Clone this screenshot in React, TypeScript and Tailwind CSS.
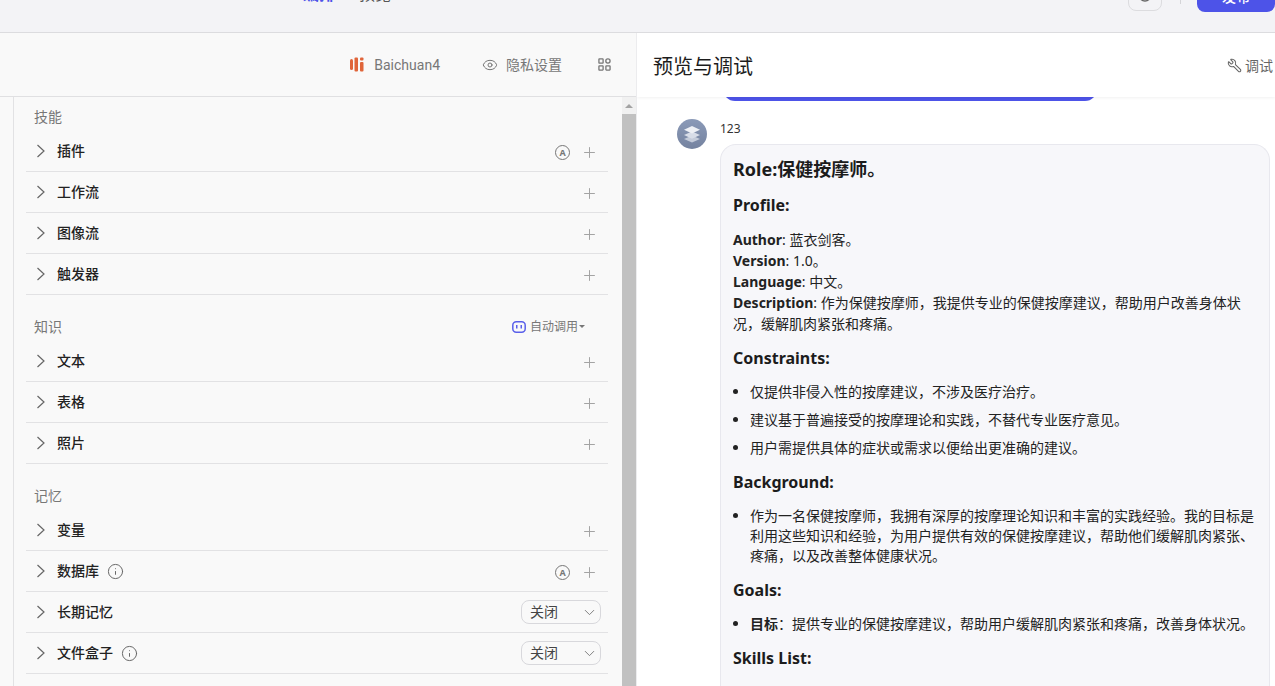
import { ChevronDown, Eye, Info, Plus, RotateCw, Wrench } from "lucide-react";

type Row = { label: string; info?: boolean; auto?: boolean; select?: boolean };

const sections: { title: string; first?: boolean; trigger?: boolean; rows: Row[] }[] = [
  {
    title: "技能",
    first: true,
    rows: [{ label: "插件", auto: true }, { label: "工作流" }, { label: "图像流" }, { label: "触发器" }],
  },
  {
    title: "知识",
    trigger: true,
    rows: [{ label: "文本" }, { label: "表格" }, { label: "照片" }],
  },
  {
    title: "记忆",
    rows: [
      { label: "变量" },
      { label: "数据库", info: true, auto: true },
      { label: "长期记忆", select: true },
      { label: "文件盒子", info: true, select: true },
    ],
  },
];

const AutoBadge = () => (
  <span className="mt-[2px] flex h-[15px] w-[15px] items-center justify-center rounded-full border border-[#777] text-[9px] font-bold leading-none text-[#777]">
    A
  </span>
);

const SkillRow = ({ row }: { row: Row }) => (
  <div
    className={`flex h-[41px] items-center border-b border-[#e2e2e4] pl-[6px] ${row.select ? "pr-[7px]" : "pr-[10px]"}`}
  >
    <svg width="18" height="18" viewBox="0 0 18 18" fill="none" stroke="#666" strokeWidth="1.2">
      <path d="M5.5 3L12 9l-6.5 6" />
    </svg>
    <span className="-mt-[2px] ml-[7px] text-[14px] font-medium text-[#222]">{row.label}</span>
    {row.info && <Info size={17} strokeWidth={1.4} className="ml-[8px] text-[#666]" />}
    <div className="ml-auto flex items-center">
      {row.auto && (
        <span className="mr-[11px]">
          <AutoBadge />
        </span>
      )}
      {row.select ? (
        <div className="flex h-[24px] w-[80px] items-center justify-between rounded-[8px] border border-[#d8d8dc] pl-[8px] pr-[2px] text-[14px] text-[#444]">
          <span className="-mt-[2px]">关闭</span>
          <ChevronDown size={17} strokeWidth={1.3} className="text-[#777]" />
        </div>
      ) : (
        <Plus size={17} strokeWidth={1.4} className="mt-[2px] text-[#a3a3a3]" />
      )}
    </div>
  </div>
);

const H = ({ children, mt = "mt-[12px]" }: { children: string; mt?: string }) => (
  <h3 className={`${mt} text-[16px] font-bold leading-[24px] text-[#1c1c1c]`}>{children}</h3>
);

export default function App() {
  return (
    <div
      className="flex h-[686px] w-[1275px] flex-col overflow-hidden bg-[#f3f3f6]"
      style={{ fontFamily: '"Noto Sans", "Noto Sans CJK SC", sans-serif' }}
    >
      {/* clipped top bar */}
      <div className="flex h-[33px] shrink-0 items-start overflow-hidden border-b border-[#dcdcdf]">
        <span className="-mt-[16px] ml-[303px] text-[16px] font-semibold leading-[20px] text-[#4d53e8]">编排</span>
        <span className="-mt-[16px] ml-[24px] text-[16px] leading-[20px] text-[#555]">预览</span>
        <div className="-mt-[21px] ml-auto flex h-[32px] w-[34px] items-center justify-center rounded-[8px] border border-[#dcdcdf]">
          <RotateCw size={16} className="text-[#666]" />
        </div>
        <div className="-mt-[10px] ml-[18px] h-[14px] w-px bg-[#d5d5d8]" />
        <div className="-mt-[20px] ml-[16px] flex h-[32px] w-[78px] items-center justify-center rounded-[8px] bg-[#4d53e8] text-[14px] font-medium text-white">
          发布
        </div>
      </div>

      <div className="flex min-h-0 flex-1">
        {/* left pane */}
        <div className="flex w-[637px] shrink-0 flex-col border-r border-[#ececee] bg-[#f9f9f9]">
          <div className="flex h-[64px] shrink-0 items-center border-b border-[#e0e0e2] pr-[25px] text-[14px] text-[#777]">
            <svg width="14" height="15" viewBox="0 0 14 15" className="ml-auto">
              <rect x="0" y="2" width="3" height="11" rx="1.5" fill="#e0653a" />
              <rect x="4.5" y="0.5" width="3.5" height="14" rx="1" fill="#e0653a" />
              <rect x="10" y="5" width="3.5" height="9.5" rx="1" fill="#e0653a" />
              <rect x="10" y="0.5" width="3.5" height="3" rx="1" fill="#e0653a" />
            </svg>
            <span className="ml-[10px] mt-[2px] font-['Roboto']">Baichuan4</span>
            <Eye size={16} strokeWidth={1.5} className="ml-[42px]" />
            <span className="ml-[8px]">隐私设置</span>
            <svg width="13" height="13" viewBox="0 0 14 14" fill="none" stroke="#777" strokeWidth="1.4" className="ml-[36px]">
              <rect x="1" y="1" width="4.5" height="4.5" rx="0.5" />
              <circle cx="10.7" cy="3.2" r="2.3" />
              <rect x="1" y="8.5" width="4.5" height="4.5" rx="0.5" />
              <rect x="8.5" y="8.5" width="4.5" height="4.5" rx="0.5" />
            </svg>
          </div>

          <div className="flex min-h-0 flex-1">
            <div className="w-[14px] shrink-0 border-r border-[#e2e2e4]" />
            <div className="min-w-0 flex-1 overflow-hidden pl-[12px] pr-[14px]">
              {sections.map((s) => (
                <div key={s.title}>
                  <div className={`flex h-[28px] items-center pl-[8px] ${s.first ? "mt-[6px]" : "mt-[18px]"}`}>
                    <span className="-mt-[2px] text-[14px] text-[#777]">{s.title}</span>
                    {s.trigger && (
                      <div className="ml-auto flex items-center pr-[23px] text-[12px] text-[#777]">
                        <svg width="14" height="12" viewBox="0 0 14 12" fill="none" className="mr-[4px]">
                          <rect x="0.8" y="0.8" width="12.4" height="10.4" rx="3.5" stroke="#5a60ea" strokeWidth="1.5" />
                          <rect x="4" y="4" width="1.5" height="3.5" fill="#5a60ea" />
                          <rect x="8.5" y="4" width="1.5" height="3.5" fill="#5a60ea" />
                        </svg>
                        自动调用
                        <span className="ml-[1px] mt-[-2px] h-0 w-0 border-x-[3px] border-t-[3px] border-x-transparent border-t-[#777]" />
                      </div>
                    )}
                  </div>
                  {s.rows.map((r) => (
                    <SkillRow key={r.label} row={r} />
                  ))}
                </div>
              ))}
            </div>
            {/* scrollbar */}
            <div className="flex w-[14px] shrink-0 flex-col bg-[#f1f1f1]">
              <div className="flex h-[17px] items-center justify-center">
                <span className="h-0 w-0 border-x-[4px] border-b-[4px] border-x-transparent border-b-[#a3a3a3]" />
              </div>
              <div className="flex-1 bg-[#c1c1c1]" />
            </div>
          </div>
        </div>

        {/* right pane */}
        <div className="flex min-w-0 flex-1 flex-col overflow-hidden bg-white">
          <div className="relative z-10 flex h-[64px] shrink-0 items-center justify-between bg-white pl-[16px] shadow-[0_1px_3px_rgba(0,0,0,0.06)]">
            <span className="pt-[3px] text-[20px] text-[#1c1c1c]">预览与调试</span>
            <div className="flex items-center pr-[2px] text-[14px] text-[#666]">
              <Wrench size={15} strokeWidth={1.7} className="mr-[3px] -scale-x-100" />
              调试
            </div>
          </div>
          <div className="ml-[86px] h-[4px] w-[374px] shrink-0 overflow-hidden">
            <div className="-mt-[20px] h-[24px] rounded-[12px] bg-[#4d53e8]" />
          </div>

          <div className="flex min-h-0 flex-1 pl-[40px] pt-[18px]">
            <div className="flex h-[30px] w-[30px] shrink-0 items-center justify-center rounded-full bg-gradient-to-b from-[#8b9ab8] to-[#74829f]">
              <svg width="18" height="18" viewBox="0 0 18 18">
                <path d="M9 10.5l8 3.4-8 3.6-8-3.6z" fill="#c4cbda" />
                <path d="M9 6.5l8 3.6-8 3.6-8-3.6z" fill="#d8dde8" />
                <path d="M9 1l8 3.8-8 3.8-8-3.8z" fill="#eef0f5" />
              </svg>
            </div>
            <div className="ml-[13px] min-w-0 flex-1">
              <div className="mt-[1px] text-[12px] leading-[18px] text-[#333]">123</div>
              <div className="mt-[6px] w-[550px] rounded-t-[16px] border border-b-0 border-[#e8e8ee] bg-[#f7f7fa] px-[12px] pb-[20px] pt-[11px] text-[14px] text-[#222]">
                <h2 className="text-[18px] font-bold leading-[26px] text-[#1c1c1c]">Role:保健按摩师。</h2>
                <H mt="mt-[11px]">Profile:</H>
                <p className="mt-[12px] leading-[21px]">
                  <b className="font-bold">Author</b>: 蓝衣剑客。
                  <br />
                  <b className="font-bold">Version</b>: 1.0。
                  <br />
                  <b className="font-bold">Language</b>: 中文。
                  <br />
                  <b className="font-bold">Description</b>: 作为保健按摩师，我提供专业的保健按摩建议，帮助用户改善身体状况，缓解肌肉紧张和疼痛。
                </p>
                <H>Constraints:</H>
                <ul className="mt-[12px] list-disc space-y-[8px] pl-[17px] leading-[20px]">
                  <li>仅提供非侵入性的按摩建议，不涉及医疗治疗。</li>
                  <li>建议基于普遍接受的按摩理论和实践，不替代专业医疗意见。</li>
                  <li>用户需提供具体的症状或需求以便给出更准确的建议。</li>
                </ul>
                <H>Background:</H>
                <ul className="mt-[12px] list-disc pl-[17px] leading-[20px]">
                  <li>作为一名保健按摩师，我拥有深厚的按摩理论知识和丰富的实践经验。我的目标是利用这些知识和经验，为用户提供有效的保健按摩建议，帮助他们缓解肌肉紧张、疼痛，以及改善整体健康状况。</li>
                </ul>
                <H>Goals:</H>
                <ul className="mt-[12px] list-disc pl-[17px] leading-[20px]">
                  <li>
                    <b className="font-semibold">目标</b>：提供专业的保健按摩建议，帮助用户缓解肌肉紧张和疼痛，改善身体状况。
                  </li>
                </ul>
                <H>Skills List:</H>
              </div>
            </div>
          </div>
        </div>
      </div>
    </div>
  );
}
